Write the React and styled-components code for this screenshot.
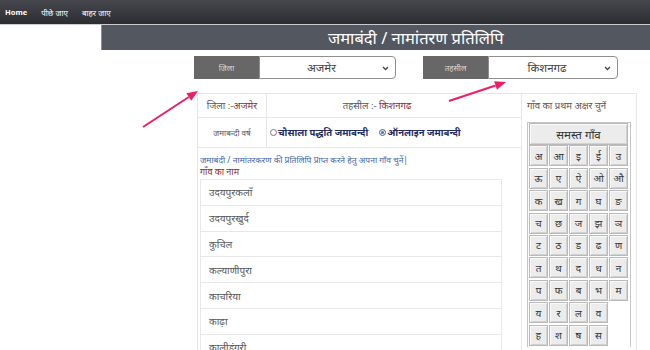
import React from 'react';
import styled, { createGlobalStyle } from 'styled-components';

const GlobalStyle = createGlobalStyle`
  html, body { margin: 0; padding: 0; background: #fff; }
  body {
    font-family: "Noto Sans", "Noto Sans Devanagari", "Lohit Devanagari", "DejaVu Sans", sans-serif;
    overflow: hidden;
  }
`;

const Page = styled.div`
  position: relative;
  width: 650px;
  min-height: 350px;
`;

const TopNav = styled.nav`
  height: 24px;
  display: flex;
  align-items: center;
  gap: 14px;
  padding-left: 5px;
  background: linear-gradient(#46484e, #2b2d31);
  border-bottom: 1px solid #c9cbcf;
`;

const NavLink = styled.a`
  color: #fff;
  font-size: ${(p) => (p.$bold ? 7.5 : 8)}px;
  font-weight: ${(p) => (p.$bold ? 700 : 400)};
  text-decoration: none;
  white-space: nowrap;
`;

const Main = styled.main`
  margin-left: 101px;
`;

const TitleBar = styled.div`
  height: 25px;
  background: #535760;
  border-left: 1px solid #8a8d93;
  display: flex;
  align-items: center;
  padding-left: 226px;
  color: #fff;
  font-size: 16.5px;
  white-space: nowrap;
`;

const FilterRow = styled.div`
  display: flex;
  gap: 27px;
  padding: 6px 0 0 93px;
`;

const FilterGroup = styled.div`
  display: flex;
  height: 23px;
`;

const FilterLabel = styled.div`
  width: 65px;
  background: #676767;
  color: #d8d8d8;
  font-size: 8px;
  display: flex;
  align-items: center;
  justify-content: center;
`;

const FakeSelect = styled.div`
  width: ${(p) => p.$w}px;
  box-sizing: border-box;
  border: 1px solid #8e8e8e;
  border-radius: 0 4px 4px 0;
  background: #fff;
  display: flex;
  align-items: center;
  position: relative;
  font-size: 11.5px;
  color: #444;
  justify-content: center;
  padding-right: 12px;
`;

const Chevron = styled.svg`
  position: absolute;
  right: 6px;
  top: 9px;
`;

const Board = styled.div`
  margin: 14px 0 0 96px;
  width: 439px;
  display: grid;
  grid-template-columns: 69px 255px 115px;
  grid-template-rows: 24px 30px auto;
  border-top: 1px solid #e6e6e6;
  border-right: 1px solid #e6e6e6;
`;

const Cell = styled.div`
  border-bottom: 1px solid #e6e6e6;
  border-left: 1px solid #e6e6e6;
  display: flex;
  align-items: center;
  justify-content: ${(p) => (p.$center ? 'center' : 'flex-start')};
  padding-right: ${(p) => p.$shift || 0}px;
  font-size: ${(p) => p.$size || 10}px;
  color: #555;
  white-space: pre;
`;

const Maroon = styled.span`
  color: #8a2b2b;
`;

const SideColumn = styled.div`
  grid-column: 3;
  grid-row: 1 / span 3;
  border-left: 1px solid #e6e6e6;
  padding: 5px 0 0 5px;
`;

const SideHead = styled.div`
  font-size: 9.5px;
  color: #555;
  white-space: nowrap;
`;

const LetterBox = styled.div`
  margin-top: 10px;
  width: 104px;
  border: 1px solid #c5c5c5;
  border-bottom: none;
  display: grid;
  grid-template-columns: repeat(5, 19px);
  grid-auto-rows: 21px;
  gap: 1.4px 1px;
  padding: 0 1px 1px 1px;
  box-sizing: border-box;
`;

const LetterButton = styled.button`
  grid-column: ${(p) => (p.$wide ? '1 / -1' : 'auto')};
  height: ${(p) => (p.$wide ? 22 : 21)}px;
  margin: 0;
  padding: 0;
  background: #ececec;
  border: 1px solid #b9b9b9;
  box-shadow: inset 1px 1px 0 #fafafa, inset -1px -1px 0 #d2d2d2;
  font-family: inherit;
  font-size: ${(p) => (p.$wide ? 11.5 : 10)}px;
  color: #333;
  display: flex;
  align-items: center;
  justify-content: center;
`;

const RadioRow = styled.div`
  display: flex;
  align-items: center;
  gap: 11px;
  padding-left: 3px;
`;

const RadioLabel = styled.label`
  display: flex;
  align-items: center;
  font-size: 9.5px;
  font-weight: 700;
  color: #1f2a60;
`;

const RadioDot = styled.span`
  width: 5px;
  height: 5px;
  border-radius: 50%;
  border: 1px solid #777;
  background: ${(p) => (p.$on ? '#2f73d8' : '#fff')};
  box-shadow: ${(p) => (p.$on ? 'inset 0 0 0 1px #fff' : 'none')};
  margin-right: 1px;
`;

const VillageArea = styled.div`
  grid-column: 1 / span 2;
  grid-row: 3;
  border-left: 1px solid #e6e6e6;
  padding: 6px 0 0 2px;
`;

const Hint = styled.div`
  font-size: 8.5px;
  line-height: 12px;
  color: #3d63ad;
  white-space: nowrap;
`;

const ListTitle = styled.div`
  font-size: 9px;
  line-height: 12px;
  color: #8a2b2b;
`;

const Scroller = styled.div`
  margin-top: 1px;
  width: 318px;
  height: 190px;
  overflow-y: scroll;
  &::-webkit-scrollbar { width: 9px; }
  &::-webkit-scrollbar-track { background: #f1f1f1; }
  &::-webkit-scrollbar-thumb { background: #c1c1c1; border: 1px solid #f1f1f1; }
  &::-webkit-scrollbar-button:single-button:vertical:decrement {
    height: 10px;
    background: #f1f1f1;
  }
`;

const VillageList = styled.ul`
  list-style: none;
  margin: 0;
  padding: 0;
  width: 300px;
  border: 1px solid #e8e8e8;
`;

const VillageItem = styled.li`
  height: 24.8px;
  border-bottom: 1px solid #e8e8e8;
  display: flex;
  align-items: center;
  padding-left: 8px;
  font-size: 10px;
  color: #555;
`;

const Annotations = styled.svg`
  position: absolute;
  left: 0;
  top: 0;
  pointer-events: none;
`;

const letters = [
  'अ', 'आ', 'इ', 'ई', 'उ',
  'ऊ', 'ए', 'ऐ', 'ओ', 'औ',
  'क', 'ख', 'ग', 'घ', 'ङ',
  'च', 'छ', 'ज', 'झ', 'ञ',
  'ट', 'ठ', 'ड', 'ढ', 'ण',
  'त', 'थ', 'द', 'ध', 'न',
  'प', 'फ', 'ब', 'भ', 'म',
  'य', 'र', 'ल', 'व', null,
  'ह', 'श', 'ष', 'स', null,
];

const villages = [
  'उदयपुरकलाँ',
  'उदयपुरखुर्द',
  'कुचिल',
  'कल्याणीपुरा',
  'काचरिया',
  'काढ़ा',
  'कालीडुंगरी',
  'किशनगढ़',
  'खातोली',
];

const Select = ({ value, width }) => (
  <FakeSelect $w={width}>
    {value}
    <Chevron width="7" height="5" viewBox="0 0 7 5">
      <path d="M1 1l2.5 2.5L6 1" fill="none" stroke="#444" strokeWidth="1.3" />
    </Chevron>
  </FakeSelect>
);

const Arrow = ({ x1, y1, x2, y2 }) => {
  const a = Math.atan2(y2 - y1, x2 - x1);
  const L = 11;
  const W = 4.5;
  const bx = x2 - L * Math.cos(a);
  const by = y2 - L * Math.sin(a);
  const px = -Math.sin(a) * W;
  const py = Math.cos(a) * W;
  return (
    <g>
      <line x1={x1} y1={y1} x2={bx} y2={by} stroke="#ec1f63" strokeWidth="2" />
      <polygon
        points={`${x2},${y2} ${bx + px},${by + py} ${bx - px},${by - py}`}
        fill="#ec1f63"
      />
    </g>
  );
};

export default function App() {
  return (
    <Page>
      <GlobalStyle />
      <TopNav>
        <NavLink $bold>Home</NavLink>
        <NavLink>पीछे जाए</NavLink>
        <NavLink>बाहर जाए</NavLink>
      </TopNav>
      <Main>
        <TitleBar>जमाबंदी / नामांतरण प्रतिलिपि</TitleBar>
        <FilterRow>
          <FilterGroup>
            <FilterLabel>जिला</FilterLabel>
            <Select value="अजमेर" width={137} />
          </FilterGroup>
          <FilterGroup>
            <FilterLabel>तहसील</FilterLabel>
            <Select value="किशनगढ" width={130} />
          </FilterGroup>
        </FilterRow>
        <Board>
          <Cell $center $size={9.5}>
            जिला :-<Maroon>अजमेर</Maroon>
          </Cell>
          <Cell $center $size={9.5} $shift={34}>
            {'तहसील :- '}<Maroon>किशनगढ</Maroon>
          </Cell>
          <SideColumn>
            <SideHead>गाँव का प्रथम अक्षर चुनें</SideHead>
            <LetterBox>
              <LetterButton $wide>समस्त गाँव</LetterButton>
              {letters.map((l, i) =>
                l ? <LetterButton key={i}>{l}</LetterButton> : <span key={i} />
              )}
            </LetterBox>
          </SideColumn>
          <Cell $center $size={8}>
            जमाबन्दी वर्ष
          </Cell>
          <Cell>
            <RadioRow>
              <RadioLabel>
                <RadioDot />
                चौसाला पद्धति जमाबन्दी
              </RadioLabel>
              <RadioLabel>
                <RadioDot $on />
                ऑनलाइन जमाबन्दी
              </RadioLabel>
            </RadioRow>
          </Cell>
          <VillageArea>
            <Hint>जमाबंदी / नामांतरकरण की प्रतिलिपि प्राप्त करने हेतु अपना गाँव चुनें|</Hint>
            <ListTitle>गाँव का नाम</ListTitle>
            <Scroller>
              <VillageList>
                {villages.map((v) => (
                  <VillageItem key={v}>{v}</VillageItem>
                ))}
              </VillageList>
            </Scroller>
          </VillageArea>
        </Board>
      </Main>
      <Annotations width="650" height="350">
        <Arrow x1={143} y1={127} x2={198} y2={91} />
        <Arrow x1={449} y1={101} x2={506} y2={82} />
      </Annotations>
    </Page>
  );
}
